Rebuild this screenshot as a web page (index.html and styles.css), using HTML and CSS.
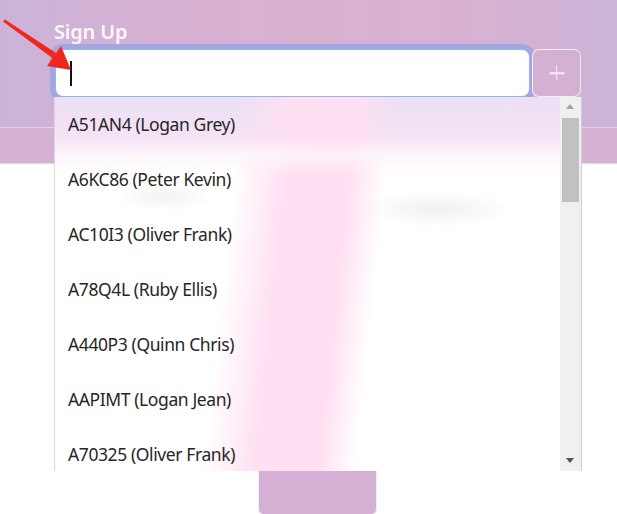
FILE: index.html
```html
<!DOCTYPE html>
<html>
<head>
<meta charset="utf-8">
<link rel="stylesheet" href="styles.css">
</head>
<body>
<header class="top">
  <div class="top-main">
    <label class="label">Sign Up</label>
    <div class="row">
      <div class="field"><span class="caret"></span></div>
      <button class="add" type="button"><span class="plus"></span></button>
    </div>
  </div>
  <div class="band"></div>
</header>
<main class="content">
  <div class="card"></div>
</main>

<div class="dropdown">
  <ul class="list">
    <li class="item">A51AN4 (Logan Grey)</li>
    <li class="item">A6KC86 (Peter Kevin)</li>
    <li class="item">AC10I3 (Oliver Frank)</li>
    <li class="item">A78Q4L (Ruby Ellis)</li>
    <li class="item">A440P3 (Quinn Chris)</li>
    <li class="item">AAPIMT (Logan Jean)</li>
    <li class="item">A70325 (Oliver Frank)</li>
  </ul>
  <div class="scrollbar">
    <span class="arr up"></span>
    <span class="thumb"></span>
    <span class="arr down"></span>
  </div>
</div>

<svg class="arrow" width="80" height="80" viewBox="0 0 80 80">
  <polygon points="3,21.5 5,19.5 56,53 53,58.5" fill="#f3261f"/>
  <polygon points="71,70 47,66 61,46" fill="#f3261f"/>
</svg>
</body>
</html>
```

FILE: styles.css
```css
html, body {
  margin: 0;
  padding: 0;
}
body {
  width: 617px;
  height: 514px;
  overflow: hidden;
  position: relative;
  background: #ffffff;
  font-family: "Noto Sans", "Open Sans", sans-serif;
}
.top {
  background: linear-gradient(90deg, #cbb3d8 0%, #d6b1d3 25%, #dab0cf 50%, #d8b1d1 75%, #ccb4d8 100%);
  box-shadow: 0 1px 1px rgba(0,0,0,0.12);
}
.top-main {
  height: 127px;
  box-sizing: border-box;
  padding: 20px 0 0 54px;
}
.label {
  display: block;
  height: 24px;
  line-height: 24px;
  font-size: 20px;
  font-weight: 600;
  letter-spacing: -0.2px;
  color: rgba(255,255,255,0.93);
}
.row {
  display: flex;
  margin-top: 5px;
  gap: 2px;
}
.field {
  width: 475px;
  height: 48px;
  margin-left: 1px;
  box-sizing: border-box;
  background: #fff;
  border: 1px solid #8db8f0;
  border-radius: 8px;
  box-shadow: 0 0 0 5px #a4a6e2;
  display: flex;
  align-items: center;
  padding-left: 14px;
}
.caret {
  width: 2px;
  height: 25px;
  background: #111;
}
.add {
  position: relative;
  width: 49px;
  height: 48px;
  margin: 0;
  padding: 0;
  box-sizing: border-box;
  background: #d4b0d4;
  border: 1px solid rgba(255,255,255,0.75);
  border-radius: 7px;
}
.plus::before, .plus::after {
  content: "";
  position: absolute;
  left: 50%;
  top: 50%;
  background: rgba(255,255,255,0.75);
}
.plus::before {
  width: 15px;
  height: 1.5px;
  transform: translate(-50%, -50%);
}
.plus::after {
  width: 1.5px;
  height: 15px;
  transform: translate(-50%, -50%);
}
.band {
  height: 35px;
  border-top: 1px solid rgba(255,255,255,0.4);
  background: #d4b1d3;
}
.content {
  height: 351px;
  display: flex;
  padding-left: 259px;
}
.card {
  width: 117px;
  height: 351px;
  background: #d4b0d4;
  border-radius: 0 0 5px 5px;
  box-shadow: 0 0 2px rgba(0,0,0,0.25);
}
.dropdown {
  position: absolute;
  left: 54px;
  top: 97px;
  width: 528px;
  height: 374px;
  box-sizing: border-box;
  border-left: 1px solid #d9d9d9;
  border-right: 1px solid #cfcfcf;
  overflow: hidden;
  background:
    radial-gradient(ellipse 50px 14px at 110px 100px, rgba(0,0,0,0.05), rgba(0,0,0,0) 100%),
    radial-gradient(ellipse 75px 18px at 382px 112px, rgba(0,0,0,0.06), rgba(0,0,0,0) 100%),
    linear-gradient(180deg, rgba(255,255,255,0) 0, rgba(255,255,255,0) 40px, rgba(255,255,255,0.55) 58px, rgba(255,255,255,0) 80px),
    linear-gradient(96deg, rgba(255,224,242,0) 185px, rgba(255,224,242,1) 238px, rgba(255,223,241,1) 300px, rgba(255,224,242,0) 338px),
    linear-gradient(180deg, #ece0f6 0, #f3e1f5 30px, #f8e6f6 52px, #fefafd 68px, #ffffff 80px);
}
.list {
  list-style: none;
  margin: 0;
  padding: 0;
}
.item {
  height: 55px;
  line-height: 55px;
  padding-left: 13px;
  font-size: 17.5px;
  letter-spacing: -0.4px;
  color: #262626;
  white-space: nowrap;
}
.scrollbar {
  position: absolute;
  right: 0;
  top: 0;
  width: 21px;
  height: 374px;
  background: #f0f0f0;
}
.thumb {
  position: absolute;
  left: 2px;
  top: 21px;
  width: 17px;
  height: 84px;
  background: #c1c1c1;
}
.arr {
  position: absolute;
  left: 6px;
  width: 0;
  height: 0;
  border-left: 4.5px solid transparent;
  border-right: 4.5px solid transparent;
}
.arr.up {
  top: 7px;
  border-bottom: 5px solid #a3a3a3;
}
.arr.down {
  bottom: 8px;
  border-top: 5px solid #505050;
}
.arrow {
  position: absolute;
  left: 0;
  top: 0;
}
```
